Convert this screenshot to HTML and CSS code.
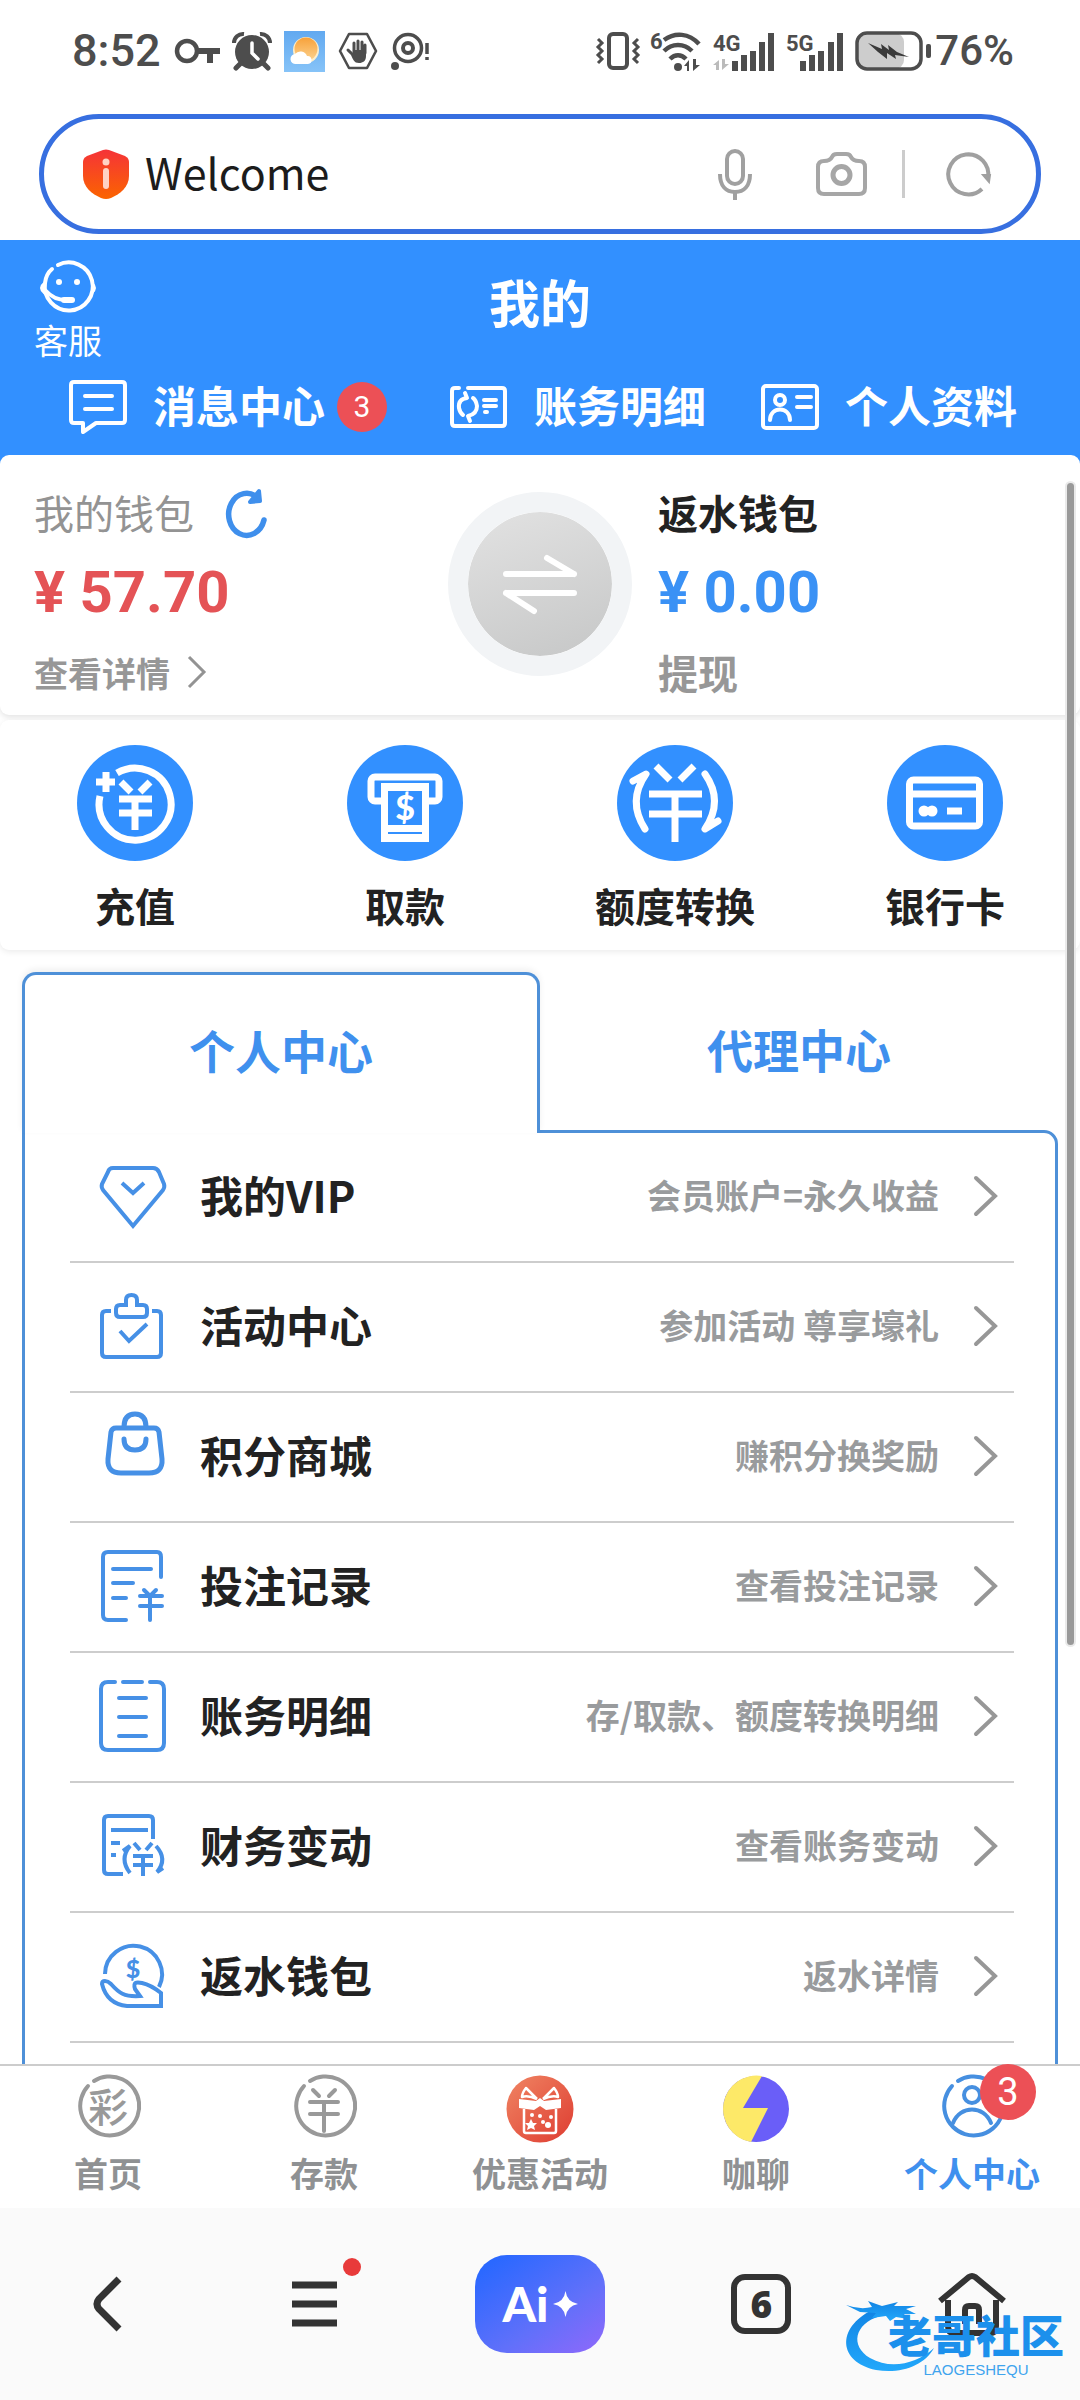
FILE: index.html
```html
<!DOCTYPE html>
<html lang="zh-CN">
<head>
<meta charset="utf-8">
<meta name="viewport" content="width=device-width, initial-scale=1">
<title>我的</title>
<link rel="stylesheet" href="styles.css">
</head>
<body>
<div class="app">

  <div class="status">
    <span class="status-text">8:52</span>
    <svg width="46" height="26" viewBox="0 0 46 26" fill="none" stroke="#4d4d4d"><circle cx="13" cy="13" r="10" stroke-width="4.5"/><path d="M23 13H46M36 13V25" stroke-width="6"/></svg>
    <svg width="38" height="38" viewBox="0 0 38 38"><circle cx="19" cy="20" r="17" fill="#4d4d4d"/><path d="M8 31l-5 5M30 31l5 5" stroke="#4d4d4d" stroke-width="5" stroke-linecap="round"/><path d="M1 11A9 9 0 0 1 11 2M37 11A9 9 0 0 0 27 2" fill="none" stroke="#4d4d4d" stroke-width="4"/><path d="M19 11v10l6 6" fill="none" stroke="#fff" stroke-width="3.5" stroke-linecap="round"/></svg>
    <svg width="41" height="41" viewBox="0 0 41 41"><defs><linearGradient id="sky" x2="0" y2="1"><stop stop-color="#62a9f0"/><stop offset="1" stop-color="#86c3f8"/></linearGradient><linearGradient id="sun" x2="0" y2="1"><stop stop-color="#f7a13a"/><stop offset="1" stop-color="#fcd28e"/></linearGradient></defs><rect width="41" height="41" fill="url(#sky)"/><circle cx="22" cy="19" r="13" fill="#fdeecb"/><circle cx="22" cy="18" r="11.5" fill="url(#sun)"/><path d="M12 33a5 5 0 0 1-1-10 7 7 0 0 1 12 2 4 4 0 0 1 1 8z" fill="#fff"/></svg>
    <svg width="40" height="38" viewBox="0 0 40 38"><path d="M11 2H29L38 19 29 36H11L2 19Z" fill="none" stroke="#4d4d4d" stroke-width="2.6" stroke-linejoin="round"/><path d="M13 21l-3-3M16 20V11M20 20V9M24 20V10M27 21V13" stroke="#4d4d4d" stroke-width="3" stroke-linecap="round"/><path d="M11 18l4 3 1-3h12v6c0 5-3 7-7 7-5 0-6-3-10-13z" fill="#4d4d4d"/></svg>
    <svg width="40" height="38" viewBox="0 0 40 38" fill="none" stroke="#4d4d4d"><circle cx="17" cy="16" r="13.500" stroke-width="3.500"/><circle cx="17" cy="16" r="5" stroke-width="4"/><circle cx="4" cy="34" r="4" fill="#4d4d4d" stroke="none"/><path d="M36 11v11M36 25v3" stroke-width="3.500"/></svg>

    <div class="status-right">
      <svg width="42" height="38" viewBox="0 0 42 38" fill="none" stroke="#4d4d4d"><rect x="12" y="2" width="18" height="34" rx="4" stroke-width="4"/><path d="M1 7l4 4-4 4 4 4-4 4 4 4-4 4M41 7l-4 4 4 4-4 4 4 4-4 4 4 4" stroke-width="3"/></svg>
      <svg width="50" height="42" viewBox="0 0 50 42" fill="none" stroke="#4d4d4d" stroke-width="4.500"><text x="-1" y="19" font-size="22" class="tiny">6</text><path d="M13 10C24 2 38 3 48 14M13 21c8-8 20-8 28 0M19 29c5-5 11-5 16 0"/><circle cx="27" cy="37" r="4" fill="#4d4d4d" stroke="none"/><path d="M38 41V30l-5 6h3v5zM42 29v12l7-6h-4v-6z" fill="#4d4d4d" stroke="none"/></svg>
      <svg width="61" height="42" viewBox="0 0 61 42" stroke="#4d4d4d" stroke-width="6"><text x="0" y="21" font-size="22" class="tiny">4G</text><path d="M22 41V31M31 41V25M40 41V21M49 41V12M58 41V3"/><path d="M6 40V30l-6 5h3v5zM9 29v11l7-6h-4v-5z" fill="#bbb" stroke="none"/></svg>
      <svg width="57" height="42" viewBox="0 0 57 42" stroke="#4d4d4d" stroke-width="6"><text x="0" y="21" font-size="22" class="tiny">5G</text><path d="M17 41V31M26 41V25M35 41V21M45 41V12M54 41V3"/></svg>
      <svg class="battery" width="76" height="40" viewBox="0 0 76 40"><rect x="2" y="2" width="47" height="36" rx="9" fill="#cdcdcd"/><rect x="2" y="2" width="64" height="36" rx="10" fill="none" stroke="#4d4d4d" stroke-width="3.500"/><rect x="71" y="13" width="5" height="14" rx="2" fill="#4d4d4d"/><path d="M13 12l14 6-1-5 8 6-1-5 9 7 12 5-14-2 1 4-9-6 0 6-9-7z" fill="#3a3a3a"/></svg>
      <span class="status-text percent">76%</span>
    </div>
  </div>

  <form class="search">
    <svg width="46" height="50" viewBox="0 0 46 50"><defs><linearGradient id="sh" x2="0" y2="1"><stop stop-color="#f53338"/><stop offset="1" stop-color="#fb6400"/></linearGradient></defs><path d="M20 1q3-1 6 0l16 6q4 2 4 6v14c0 11-9 18-18 22q-5 2-10 0C9 45 0 38 0 27V13q0-4 4-6z" fill="url(#sh)"/><circle cx="23" cy="13" r="3.500" fill="#ffd2c4"/><rect x="20" y="19" width="6" height="21" rx="3" fill="#ffd2c4"/></svg>
    <input class="search-input" type="text" value="Welcome" aria-label="地址栏">
    <button class="icon-btn" type="button" aria-label="语音"><svg width="34" height="52" viewBox="0 0 34 52" fill="none" stroke="#a0a0a0" stroke-width="4"><rect x="9" y="3" width="16" height="33" rx="8"/><path d="M2 26c0 12 6 18 15 18s15-6 15-18M17 44v8"/></svg></button>
    <button class="icon-btn" type="button" aria-label="拍照"><svg width="51" height="44" viewBox="0 0 51 44" fill="none" stroke="#a6a6a6" stroke-width="4"><path d="M8 9q6 0 8-4 1-3 5-3h9q4 0 5 3 2 4 8 4 6 0 6 6v21q0 6-6 6H8q-6 0-6-6V15q0-6 6-6z"/><circle cx="25.500" cy="23" r="8.500" stroke-width="5"/></svg></button>
    <span class="search-sep"></span>
    <button class="icon-btn" type="button" aria-label="刷新"><svg width="46" height="46" viewBox="0 0 46 46" fill="none" stroke="#a0a0a0" stroke-width="4"><path d="M36 38A20 20 0 1 1 42 27"/><path d="M37 24h7l-1 7z" fill="#a0a0a0" stroke-width="2"/></svg></button>
  </form>

  <header class="header">
    <div class="header-top">
      <a class="service" href="#">
        <svg width="58" height="52" viewBox="0 0 58 52" fill="none" stroke="#fff" stroke-width="4" stroke-linecap="round"><path d="M19 4A24 24 0 1 1 6 22Q7 13 13 8"/><path d="M5 22q-6 5 0 10zM53 22q6 5 0 10z" fill="#fff" stroke-width="2"/><path d="M7 30q8 9 20 9"/><path d="M25 39h8" stroke-width="6"/><circle cx="20" cy="21" r="3" fill="#fff" stroke="none"/><circle cx="38" cy="21" r="3" fill="#fff" stroke="none"/></svg>
        <span>客服</span>
      </a>
      <h1 class="title">我的</h1>
    </div>
    <nav class="header-links">
      <a class="header-link" href="#">
        <svg width="58" height="54" viewBox="0 0 58 54" fill="none" stroke="#fff" stroke-width="4" stroke-linecap="round" stroke-linejoin="round"><path d="M14 52V43H5q-3 0-3-3V5q0-3 3-3H53q3 0 3 3V40q0 3-3 3H27Z"/><path d="M16 16H43M16 29H43"/></svg>
        <span>消息中心</span><b class="badge">3</b>
      </a>
      <a class="header-link" href="#">
        <svg width="58" height="44" viewBox="0 0 58 44" fill="none" stroke="#fff" stroke-width="4" stroke-linecap="round" stroke-linejoin="round"><path d="M9 3H5Q2 3 2 6V38q0 3 3 3H52q3 0 3-3V6q0-3-3-3H18"/><path d="M15 8L17 13Q8 14 9 23 10 28 13 30M20 36L18 31Q27 29 27 21 26 15 23 13"/><path d="M34 15H46M34 21H46M35 27h2"/></svg>
        <span>账务明细</span>
      </a>
      <a class="header-link" href="#">
        <svg width="58" height="46" viewBox="0 0 58 46" fill="none" stroke="#fff" stroke-width="4" stroke-linecap="round"><rect x="2" y="2" width="54" height="42" rx="3"/><circle cx="19" cy="16" r="5"/><path d="M9 36c0-14 20-14 20 0M36 13H50M36 23H50"/></svg>
        <span>个人资料</span>
      </a>
    </nav>
  </header>

  <main class="content">
    <section class="wallet">
      <div class="wallet-side">
        <div class="wallet-name muted">我的钱包
          <button class="icon-btn" type="button" aria-label="刷新余额"><svg width="42" height="50" viewBox="0 0 42 50" fill="none" stroke="#3f8fec" stroke-width="5.500" stroke-linecap="round"><path d="M38 33A18 21 0 1 1 32 11"/><path d="M33 4l1 10-10 1z" fill="#3f8fec" stroke-width="4" stroke-linejoin="round"/></svg></button>
        </div>
        <div class="amount red">¥ 57.70</div>
        <a class="details" href="#">查看详情
          <svg width="18" height="32" viewBox="0 0 18 32" fill="none" stroke="#939393" stroke-width="3"><path d="M1 1L16 16 1 31"/></svg></a>
      </div>
      <button class="swap" type="button" aria-label="转换">
        <svg width="74" height="60" viewBox="0 0 74 60" fill="none" stroke="#fff" stroke-width="6" stroke-linecap="round"><path d="M3 20H71M71 20L44 4M71 39H3M3 39L31 57"/></svg>
      </button>
      <div class="wallet-side">
        <div class="wallet-name strong">返水钱包</div>
        <div class="amount blue">¥ 0.00</div>
        <a class="withdraw" href="#">提现</a>
      </div>
    </section>

    <nav class="actions">
      <a class="action" href="#">
        <svg width="116" height="116" viewBox="0 0 116 116" fill="none" stroke="#fff" stroke-width="7"><circle cx="58" cy="58" r="58" fill="#3290ff" stroke="none"/><path d="M40 28A36 36 0 1 1 23 51"/><path d="M29 27V47M19 37H38M44 37L54 47M73 37L63 47M42 54H75M42 68H75M58 54V85"/></svg>
        <span>充值</span></a>
      <a class="action" href="#">
        <svg width="116" height="116" viewBox="0 0 116 116"><circle cx="58" cy="58" r="58" fill="#3290ff"/><path d="M36 56H28a4 4 0 0 1-4-4V36a4 4 0 0 1 4-4H88a4 4 0 0 1 4 4V52a4 4 0 0 1-4 4H80" fill="none" stroke="#fff" stroke-width="7"/><path fill="#fff" fill-rule="evenodd" d="M34 38H82V97H34ZM41 46V80H75V46ZM41 87V89H75V87Z"/><text x="58" y="75" font-size="34" class="dollar" fill="#fff">$</text></svg>
        <span>取款</span></a>
      <a class="action" href="#">
        <svg width="116" height="116" viewBox="0 0 116 116" fill="none" stroke="#fff" stroke-width="7"><circle cx="58" cy="58" r="58" fill="#3290ff" stroke="none"/><path d="M39 21L53 35M77 21L63 35M32 49H85M32 69H85M58 49V97"/><path stroke-linecap="round" stroke-linejoin="round" d="M28 84Q10 56 29 29L16 36M88 29Q107 56 88 84L101 76"/></svg>
        <span>额度转换</span></a>
      <a class="action" href="#">
        <svg width="116" height="116" viewBox="0 0 116 116" fill="none" stroke="#fff" stroke-width="7"><circle cx="58" cy="58" r="58" fill="#3290ff" stroke="none"/><rect x="22.500" y="35" width="70" height="46" rx="4"/><path d="M22 49H93M60 66H75"/><g fill="#fff" stroke="none"><circle cx="37" cy="66" r="5.500"/><circle cx="45" cy="66" r="5.500"/></g></svg>
        <span>银行卡</span></a>
    </nav>

    <div class="tabs">
      <button class="tab tab-active" type="button">个人中心</button>
      <button class="tab" type="button">代理中心</button>
    </div>
    <ul class="menu">
      <li><a class="row" href="#">
        <svg class="row-icon" viewBox="0 0 68 76"><path d="M14 10H54Q58 10 60 14L65 26Q66 29 64 32L34 68 4 32Q2 29 3 26L9 14Q10 10 14 10Z"/><path d="M23 25L34 35 45 25"/></svg>
        <span class="row-name">我的VIP</span><span class="row-note">会员账户=永久收益</span>
        <svg class="chevron" viewBox="0 0 24 40"><path d="M2 2L21 20 2 38"/></svg></a></li>
      <li><a class="row" href="#">
        <svg class="row-icon" viewBox="0 0 68 76"><path d="M12 23H7Q3 23 3 27V65q0 4 4 4H58q4 0 4-4V27q0-4-4-4H53"/><path d="M27 17V12q0-5 5.500-5T38 12v5h6q4 0 4 4v4q0 4-4 4H21q-4 0-4-4V21q0-4 4-4Z"/><path d="M21 43L30 53 48 36"/></svg>
        <span class="row-name">活动中心</span><span class="row-note">参加活动 尊享壕礼</span>
        <svg class="chevron" viewBox="0 0 24 40"><path d="M2 2L21 20 2 38"/></svg></a></li>
      <li><a class="row" href="#">
        <svg class="row-icon bold" viewBox="0 0 68 76"><path d="M17 10H55Q59 10 60 14L63 41Q64 55 50 55H22Q8 55 9 41L12 14Q13 10 17 10Z"/><path d="M25 9Q25-4 36-4T47 9M25 21Q25 32 36 32T47 21"/></svg>
        <span class="row-name">积分商城</span><span class="row-note">赚积分换奖励</span>
        <svg class="chevron" viewBox="0 0 24 40"><path d="M2 2L21 20 2 38"/></svg></a></li>
      <li><a class="row" href="#">
        <svg class="row-icon round" viewBox="0 0 68 76"><path d="M27 72H9Q4 72 4 67V9Q4 4 9 4H58Q62 4 62 9V29M14 21H52M14 35H34M14 50H27M45 42L51 48 57 42M41 48H63M41 58H63M51 48V72"/></svg>
        <span class="row-name">投注记录</span><span class="row-note">查看投注记录</span>
        <svg class="chevron" viewBox="0 0 24 40"><path d="M2 2L21 20 2 38"/></svg></a></li>
      <li><a class="row" href="#">
        <svg class="row-icon round" viewBox="0 0 68 76"><path d="M16 4H9Q2 4 2 11V65q0 7 7 7H58q7 0 7-7V11q0-7-7-7H51M24 4H43M20 20H47M20 39H47M20 58H47"/></svg>
        <span class="row-name">账务明细</span><span class="row-note">存/取款、额度转换明细</span>
        <svg class="chevron" viewBox="0 0 24 40"><path d="M2 2L21 20 2 38"/></svg></a></li>
      <li><a class="row" href="#">
        <svg class="row-icon" viewBox="0 0 68 76"><path d="M24 66H9Q5 66 5 62V12Q5 8 9 8H50Q54 8 54 12V31M12 22H49M12 35H21M12 47H17M35 35L41 42M53 35L47 42M34 48H54M34 57H54M44 48V68M31 65Q20 51 31 38L24 43M57 38Q69 51 58 64L64 60"/></svg>
        <span class="row-name">财务变动</span><span class="row-note">查看账务变动</span>
        <svg class="chevron" viewBox="0 0 24 40"><path d="M2 2L21 20 2 38"/></svg></a></li>
      <li><a class="row" href="#">
        <svg class="row-icon" viewBox="0 0 68 76"><path d="M6 36A28.500 28.500 0 1 1 60 49"/><path d="M3 46C3 42 8 42 12 46 20 55 25 59 41 58L36 51C34 44 37 44 43 45Q52 47 62 55V68H28Q8 66 3 46Z"/><text x="34" y="40" font-size="25" class="dollar" fill="#4690e6" stroke="none">$</text></svg>
        <span class="row-name">返水钱包</span><span class="row-note">返水详情</span>
        <svg class="chevron" viewBox="0 0 24 40"><path d="M2 2L21 20 2 38"/></svg></a></li>
      <li class="row-rest"></li>
    </ul>
    <span class="scrollbar"></span>
  </main>

  <nav class="nav">
    <a class="nav-item" href="#">
      <svg width="64" height="68" viewBox="0 0 64 68" fill="none" stroke="#999" stroke-width="4" stroke-linecap="round"><path d="M18 6A29.500 29.500 0 1 1 12 11"/><text x="32" y="47" font-size="40" class="cai">彩</text></svg>
      <span>首页</span></a>
    <a class="nav-item" href="#">
      <svg width="64" height="68" viewBox="0 0 64 68" fill="none" stroke="#999" stroke-width="4" stroke-linecap="round"><path d="M18 6A29.500 29.500 0 1 1 12 11M21 15L27 21M43 15L37 21M18 27H46M18 39H46M32 27V56"/></svg>
      <span>存款</span></a>
    <a class="nav-item" href="#">
      <svg width="68" height="68" viewBox="0 0 68 68"><defs><linearGradient id="gift" x2="1" y2="1"><stop stop-color="#f08563"/><stop offset="1" stop-color="#de3c31"/></linearGradient></defs><circle cx="34" cy="34" r="33.500" fill="url(#gift)"/><g fill="none" stroke="#fff" stroke-width="2.500" stroke-linejoin="round"><path d="M31 24L20 13q-4 5-4 9 6-2 15 2M37 24L48 13q4 5 4 9-6-2-15 2M18 34V56q0 2 2 2H48q2 0 2-2V34"/></g><path d="M13 24l17 2 4-3 4 3 17-2V33L40 35l-6-4-6 4-15-2z" fill="#fff"/><g fill="#fff"><path d="M25 44l2 4 4 0-3 3 1 4-4-2-4 2 1-4-3-3h4z"/><circle cx="26" cy="40" r="2"/><circle cx="34" cy="41" r="2"/><circle cx="37" cy="47" r="2"/><circle cx="45" cy="42" r="2"/><circle cx="42" cy="50" r="3"/></g></svg>
      <span>优惠活动</span></a>
    <a class="nav-item" href="#">
      <svg width="68" height="68" viewBox="0 0 68 68"><circle cx="34" cy="34" r="33" fill="#6a5ef8"/><path d="M40 1A33 33 0 1 0 29 67L46 33H21Z" fill="#fde968"/></svg>
      <span>咖聊</span></a>
    <a class="nav-item nav-active" href="#">
      <svg width="64" height="68" viewBox="0 0 64 68" fill="none" stroke="#468fe0" stroke-width="4" stroke-linecap="round"><path d="M18 6A29.500 29.500 0 1 1 12 11"/><circle cx="32" cy="20" r="8"/><path d="M13 48C20 30 44 30 51 48"/></svg>
      <span>个人中心</span><b class="nav-badge">3</b></a>
  </nav>

  <footer class="toolbar">
    <button class="icon-btn" type="button" aria-label="后退"><svg width="30" height="56" viewBox="0 0 30 56" fill="none" stroke="#333" stroke-width="7"><path d="M26 3L6 23q-4 5 0 10L26 53"/></svg></button>
    <button class="icon-btn" type="button" aria-label="菜单"><svg width="65" height="88" viewBox="0 0 65 88"><path d="M0 25H45M0 44H45M0 63H45" stroke="#333" stroke-width="7"/><circle cx="60" cy="7" r="9" fill="#e83a3a"/></svg></button>
    <button class="ai" type="button"><span>Ai</span><svg width="25" height="26" viewBox="0 0 25 26"><path d="M12.500 0Q14 11 25 13 14 15 12.500 26 11 15 0 13 11 11 12.500 0Z" fill="#fff"/></svg></button>
    <button class="pages" type="button">6</button>
    <button class="icon-btn" type="button" aria-label="主页"><svg width="68" height="64" viewBox="0 0 68 64" fill="none" stroke="#333" stroke-width="6"><path d="M2 29L31 5q3-2 6 0L66 29"/><path d="M10 28V54q0 7 6 7H52q6 0 6-7V28"/><path d="M27 52V38q0-4 4-4h6q4 0 4 4V52"/></svg></button>
    <div class="watermark">
      <svg width="90" height="72" viewBox="0 0 90 72"><defs><linearGradient id="wm" x2="0" y2="1"><stop stop-color="#1284e4"/><stop offset="1" stop-color="#22a8fb"/></linearGradient></defs><path d="M26 10C-10 28-8 62 30 70c25 4 48-4 58-22C70 64 45 70 24 58 4 46 8 24 34 16z" fill="url(#wm)"/><path d="M0 5q14 5 26 2L22 1q8 3 14 5l16-4-4 4 22 0-10 3 10 5-12 0 4 5-12-2-6 4-4-5-14 2 4-5-16-1z" fill="url(#wm)"/></svg>
      <div class="watermark-text"><span class="watermark-cn">老哥社区</span><span class="watermark-en">LAOGESHEQU</span></div>
    </div>
  </footer>
</div>
</body>
</html>
```
FILE: styles.css
```css
* { box-sizing: border-box; }

body {
  margin: 0;
  background: #fff;
  color: #222;
  font-family: "Noto Sans CJK SC", sans-serif;
}

a { color: inherit; text-decoration: none; }

svg { display: block; flex: none; overflow: visible; }

button {
  padding: 0;
  border: 0;
  background: none;
  color: inherit;
  font: inherit;
}

.icon-btn { display: flex; flex: none; }

.app {
  display: flex;
  flex-direction: column;
  height: 100vh;
}

/* Status bar */
.status {
  display: flex;
  align-items: center;
  gap: 13px;
  flex: none;
  height: 102px;
  padding: 0 66px 0 72px;
}

.status-text {
  color: #4d4d4d;
  font: 500 45px/50px Roboto, sans-serif;
}

.percent { font-size: 42px; }

.status-right {
  display: flex;
  align-items: center;
  gap: 12px;
  margin-left: auto;
}

.battery { margin-right: -8px; }

.tiny {
  fill: #4d4d4d;
  stroke: none;
  font-family: Roboto, sans-serif;
  font-weight: 700;
}

.dollar {
  stroke: none;
  font-family: Lato, sans-serif;
  font-weight: 900;
  text-anchor: middle;
}

/* Address bar */
.search {
  display: flex;
  align-items: center;
  flex: none;
  height: 120px;
  margin: 12px 39px 6px;
  padding: 0 44px 0 39px;
  border: 5px solid #376fe0;
  border-radius: 60px;
}

.search-input {
  flex: 1;
  min-width: 0;
  margin-left: 16px;
  padding: 0 0 6px;
  border: 0;
  outline: 0;
  background: none;
  color: #1c1c1c;
  font: 400 43px/60px "Noto Sans CJK SC", sans-serif;
}

.search .icon-btn + .icon-btn { margin-left: 64px; }

.search-sep {
  width: 3px;
  height: 48px;
  margin: 0 41px 0 35px;
  background: #ccc;
}

/* Blue header */
.header {
  flex: none;
  height: 224px;
  margin-bottom: -9px;
  background: #3290ff;
  color: #fff;
}

.header-top {
  display: grid;
  grid-template-columns: 1fr auto 1fr;
  height: 128px;
  padding: 21px 34px 0;
}

.service {
  display: flex;
  flex-direction: column;
  align-items: center;
  justify-self: start;
  font-size: 34px;
  line-height: 50px;
  gap: 2px;
}

.title {
  margin: 3px 0 0;
  font-size: 51px;
  font-weight: 700;
  line-height: 74px;
}

.header-links {
  display: flex;
  align-items: center;
  gap: 55px;
  height: 78px;
  padding: 0 60px 0 69px;
}

.header-link {
  display: flex;
  align-items: center;
  gap: 26px;
  font-size: 43px;
  font-weight: 700;
  line-height: 58px;
  white-space: nowrap;
}

.header-link span { padding-bottom: 6px; }

.badge {
  width: 50px;
  height: 50px;
  margin: 0 8px 0 -14px;
  border-radius: 50%;
  background: #ec5056;
  font: 400 30px/50px Roboto, sans-serif;
  text-align: center;
}

/* Scrolling area */
.content {
  position: relative;
  flex: 1;
  min-height: 0;
  overflow: hidden;
  border-radius: 9px 9px 0 0;
  background: #fff;
}

.scrollbar {
  position: absolute;
  top: 28px;
  right: 6px;
  width: 7px;
  height: 1162px;
  border-radius: 4px;
  background: #999;
  box-shadow: 0 0 0 2px #eaeaea;
}

.wallet {
  display: grid;
  grid-template-columns: 1fr 184px 1fr;
  height: 260px;
  border-radius: 9px;
  box-shadow: 0 2px 6px #0000001f;
}

.wallet-side { padding: 32px 27px 0 34px; }

.swap + .wallet-side { padding-left: 26px; }

.wallet-name {
  display: flex;
  align-items: center;
  gap: 32px;
  height: 50px;
  font-size: 40px;
}

.muted { color: #939393; }

.strong { color: #222; font-weight: 700; }

.amount {
  margin: 22px 0;
  font: 700 58px/66px Roboto, sans-serif;
}

.red { color: #e45356; }

.blue { color: #3a91f5; }

.details,
.withdraw {
  display: flex;
  align-items: center;
  gap: 18px;
  height: 50px;
  color: #979797;
  font-size: 34px;
  font-weight: 700;
}

.withdraw { font-size: 40px; }

.swap {
  display: flex;
  align-items: center;
  justify-content: center;
  width: 184px;
  height: 184px;
  margin-top: 37px;
  border: 20px solid #f2f4f6;
  border-radius: 50%;
  background: linear-gradient(160deg, #e2e2e2, #c6c7c7) padding-box;
}

.actions {
  display: grid;
  grid-template-columns: repeat(4, 1fr);
  height: 230px;
  margin-top: 5px;
  padding-top: 25px;
  border-radius: 9px;
  background: #fff;
  box-shadow: 0 2px 6px #00000014;
}

.action {
  display: flex;
  flex-direction: column;
  align-items: center;
  gap: 15px;
  font-size: 40px;
  font-weight: 700;
  line-height: 58px;
}

/* Tabs and menu */
.tabs {
  display: flex;
  position: relative;
  z-index: 1;
  margin: 22px 22px -3px;
}

.tab {
  width: 50%;
  height: 161px;
  padding-bottom: 10px;
  color: #3f90ee;
  font-size: 46px;
  font-weight: 700;
}

.tab-active {
  border: 3px solid #4e90d8;
  border-bottom: 0;
  border-radius: 14px 14px 0 0;
  background: #fff;
  box-shadow: 0 -3px 6px #00000010;
}

.menu {
  margin: 0 22px;
  padding: 0 41px 0 45px;
  border: 3px solid #4e90d8;
  border-radius: 0 14px 0 0;
  list-style: none;
}

.row {
  display: flex;
  align-items: center;
  height: 130px;
  padding: 0 16px 2px 29px;
  border-bottom: 2px solid #cdcdcd;
}

.row-rest { height: 130px; }

.row-icon {
  width: 68px;
  height: 76px;
  fill: none;
  stroke: #4690e6;
  stroke-width: 4;
}

.round { stroke-linecap: round; }

.bold { stroke-width: 5; stroke-linecap: round; }

.row-name {
  margin-left: 33px;
  padding-bottom: 4px;
  font-size: 43px;
  font-weight: 700;
}

.row-note {
  margin-left: auto;
  padding-bottom: 4px;
  color: #999b9d;
  font-size: 34px;
  font-weight: 700;
}

.chevron {
  width: 24px;
  height: 40px;
  margin-left: 35px;
  fill: none;
  stroke: #979797;
  stroke-width: 4;
  stroke-linecap: round;
}

/* Site navigation */
.nav {
  display: grid;
  grid-template-columns: repeat(5, 1fr);
  flex: none;
  height: 144px;
  border-top: 2px solid #ccc;
  background: #fff;
}

.nav-item {
  display: flex;
  position: relative;
  flex-direction: column;
  align-items: center;
  gap: 6px;
  padding-top: 9px;
  color: #8f9193;
  font-size: 34px;
  font-weight: 700;
  line-height: 48px;
}

.nav-active { color: #3f90ee; }

.cai {
  fill: #999;
  stroke: none;
  font-family: "Noto Sans CJK SC", sans-serif;
  font-weight: 500;
  text-anchor: middle;
}

.nav-badge {
  position: absolute;
  top: -2px;
  left: calc(50% + 8px);
  width: 56px;
  height: 56px;
  border-radius: 50%;
  background: #ec5056;
  color: #fff;
  font: 400 38px/56px Roboto, sans-serif;
  text-align: center;
}

/* Browser toolbar */
.toolbar {
  display: grid;
  position: relative;
  grid-template-columns: 20% 20% 20% 21% 18%;
  align-items: center;
  justify-items: center;
  flex: none;
  height: 192px;
  background: #fafafa;
  color: #333;
}

.ai {
  display: flex;
  align-items: center;
  justify-content: center;
  gap: 4px;
  width: 130px;
  height: 98px;
  border-radius: 32px;
  background: linear-gradient(145deg, #2a68ff 10%, #6070fa 60%, #9068fb);
  color: #fff;
  font: 900 48px/60px Lato, sans-serif;
}

.pages {
  width: 60px;
  height: 60px;
  border: 6px solid #333;
  border-radius: 14px;
  font: 800 37px/48px "Open Sans", sans-serif;
}

.watermark {
  display: flex;
  position: absolute;
  right: 16px;
  bottom: 22px;
}

.watermark-text {
  display: flex;
  flex-direction: column;
  align-items: center;
  margin-left: -48px;
  padding-top: 6px;
}

.watermark-cn {
  color: #1c90ec;
  font-size: 44px;
  font-weight: 900;
  line-height: 56px;
}

.watermark-en {
  color: #3fa4ee;
  font: 400 15px/16px "Liberation Sans", sans-serif;
}
```
